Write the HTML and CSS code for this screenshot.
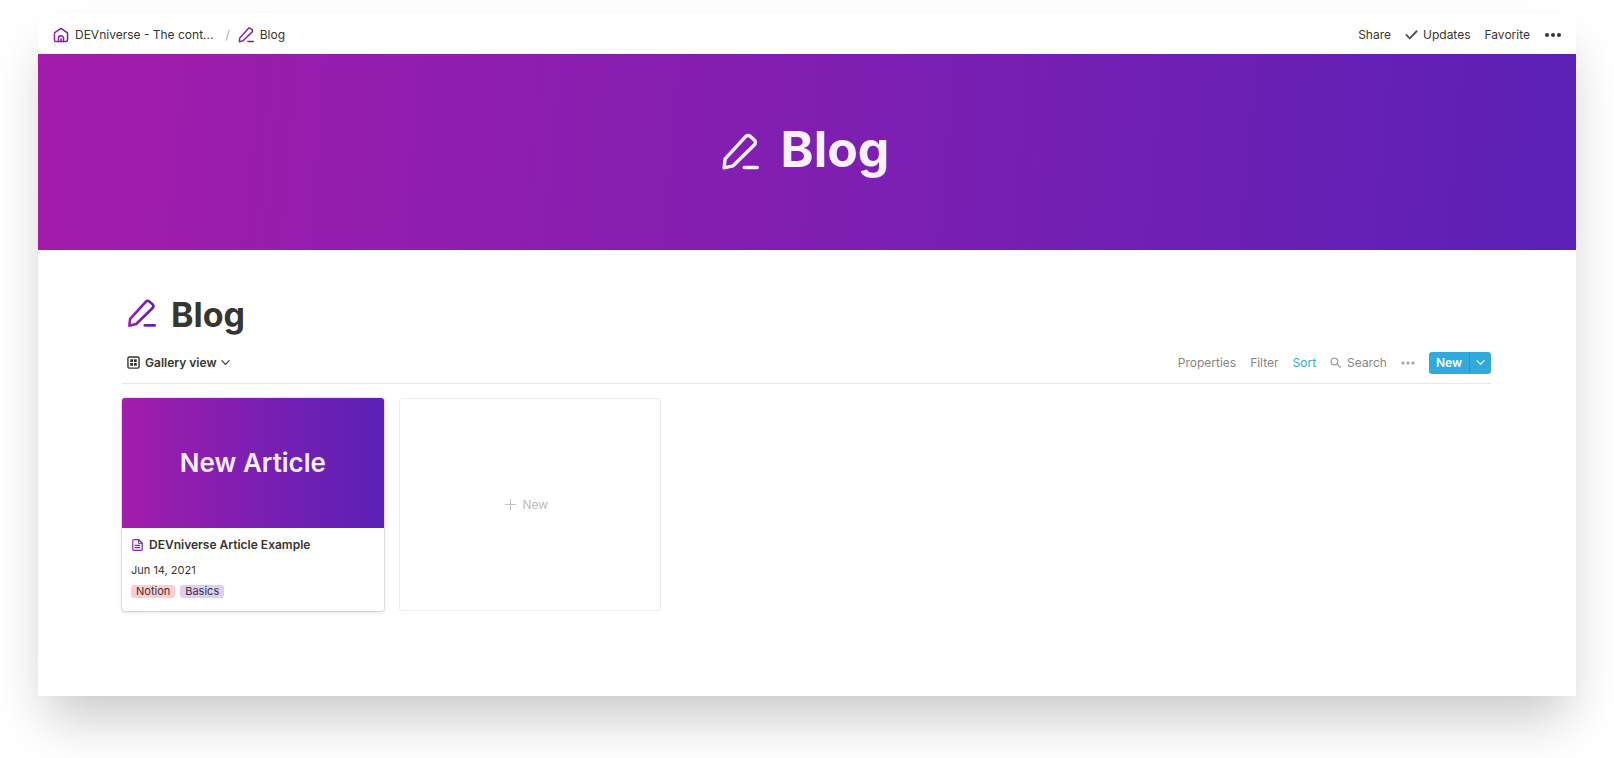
FILE: index.html
```html
<!DOCTYPE html>
<html lang="en">
<head>
  <meta charset="utf-8">
  <meta name="viewport" content="width=device-width, initial-scale=1.0">
  <title>Blog</title>
  <link rel="stylesheet" href="styles.css">
</head>
<body>
  <!-- Shared icon shapes -->
  <svg class="defs" width="0" height="0" aria-hidden="true">
    <defs>
      <linearGradient id="purple" gradientUnits="userSpaceOnUse" x1="0" y1="0" x2="22" y2="0">
        <stop offset="0" stop-color="#a31cab"/>
        <stop offset="1" stop-color="#5b20b5"/>
      </linearGradient>
      <symbol id="pencil" viewBox="0 0 22 22">
        <path d="M1.8 20.2l.6-5.2L14.2 2.1a2 2 0 0 1 2.9-.1l2.2 2a2 2 0 0 1 .1 2.8L7 19z"/>
        <path d="M13.5 20H21"/>
      </symbol>
    </defs>
  </svg>

  <div class="window">
    <header class="topbar">
      <nav class="breadcrumb">
        <a href="#">
          <svg class="icon line" viewBox="0 0 22 22">
            <path d="M2 8.2L11 2l9 6.2V18a2 2 0 0 1-2 2H4a2 2 0 0 1-2-2z"/>
            <path d="M7.5 20v-4.5a3.5 3.5 0 0 1 7 0V20M11 20v-4"/>
          </svg>
          DEVniverse - The cont...
        </a>
        <span class="slash">/</span>
        <a href="#"><svg class="icon line"><use href="#pencil"/></svg>Blog</a>
      </nav>
      <div class="actions">
        <button>Share</button>
        <button>
          <svg class="check" viewBox="0 0 14 14"><path d="M1.5 7.5l3.7 3.7L12.5 3.5"/></svg>
          Updates
        </button>
        <button>Favorite</button>
        <button aria-label="More">
          <svg class="dots" viewBox="0 0 18 6"><circle cx="3" cy="3" r="2"/><circle cx="9" cy="3" r="2"/><circle cx="15" cy="3" r="2"/></svg>
        </button>
      </div>
    </header>

    <div class="banner">
      <svg class="banner-icon"><use href="#pencil"/></svg>
      <span>Blog</span>
    </div>

    <main class="page">
      <h1><svg class="title-icon line"><use href="#pencil"/></svg>Blog</h1>

      <div class="toolbar">
        <button class="view">
          <svg class="grid-icon" viewBox="0 0 14 14">
            <rect class="frame" x="1" y="1" width="12" height="12" rx="1.5"/>
            <path d="M3.5 3.5h3v3h-3zM7.5 3.5h3v3h-3zM3.5 7.5h3v3h-3zM7.5 7.5h3v3h-3z"/>
          </svg>
          Gallery view
          <svg class="chevron" viewBox="0 0 10 10"><path d="M1 3l4 4 4-4"/></svg>
        </button>
        <div class="tools">
          <button>Properties</button>
          <button>Filter</button>
          <button class="active">Sort</button>
          <button>
            <svg class="search-icon" viewBox="0 0 12 12"><circle cx="4.8" cy="4.8" r="3.6"/><path d="M7.5 7.5l3.7 3.7"/></svg>
            Search
          </button>
          <button aria-label="View options">
            <svg class="dots small" viewBox="0 0 14 4"><circle cx="2" cy="2" r="1.6"/><circle cx="7" cy="2" r="1.6"/><circle cx="12" cy="2" r="1.6"/></svg>
          </button>
          <div class="new-group">
            <button>New</button>
            <button class="drop" aria-label="Templates">
              <svg class="chevron" viewBox="0 0 10 10"><path d="M1 3l4 4 4-4"/></svg>
            </button>
          </div>
        </div>
      </div>

      <!-- Gallery -->
      <div class="gallery">
        <a class="card" href="#">
          <div class="cover">New Article</div>
          <div class="card-body">
            <h2>
              <svg class="doc line" viewBox="0 0 22 22">
                <path d="M13 2H5a2 2 0 0 0-2 2v14a2 2 0 0 0 2 2h12a2 2 0 0 0 2-2V8z"/>
                <path d="M13 2v6h6M7 11.5h8M7 15.5h8"/>
              </svg>
              DEVniverse Article Example
            </h2>
            <div class="date">Jun 14, 2021</div>
            <div class="tags">
              <span class="tag red">Notion</span>
              <span class="tag purple">Basics</span>
            </div>
          </div>
        </a>
        <button class="new-card">
          <svg class="plus" viewBox="0 0 12 12"><path d="M6 0v12M0 6h12"/></svg>
          New
        </button>
      </div>
    </main>
  </div>
</body>
</html>
```
FILE: styles.css
```css
* {
  box-sizing: border-box;
}

body {
  margin: 0;
  padding: 14px 38px 62px;
  background: #fff;
  color: #37352f;
  font-family: Inter, "Liberation Sans", sans-serif;
  font-size: 12px;
  line-height: 20px;
}

a {
  color: inherit;
  text-decoration: none;
}

button {
  display: flex;
  align-items: center;
  padding: 0;
  border: 0;
  background: none;
  color: inherit;
  font: inherit;
  cursor: pointer;
}

svg {
  flex: none;
  fill: none;
  stroke-linecap: round;
  stroke-linejoin: round;
}

.defs {
  position: absolute;
}

.line {
  stroke: url(#purple);
  stroke-width: 2;
}

.window {
  background: #fff;
  box-shadow: 0 30px 50px -9px rgba(0, 0, 0, 0.22);
}

/* Top bar */
.topbar {
  display: flex;
  align-items: center;
  justify-content: space-between;
  height: 40px;
  padding: 1px 14px 0 15px;
}

.breadcrumb,
.breadcrumb a,
.actions {
  display: flex;
  align-items: center;
}

.breadcrumb a {
  gap: 6px;
}

.icon {
  width: 16px;
  height: 16px;
}

.slash {
  margin: 0 8px 0 12px;
  color: #aaa;
}

.actions {
  gap: 14px;
}

.actions button {
  gap: 5px;
}

.check {
  width: 13px;
  height: 13px;
  stroke: #55534e;
  stroke-width: 2;
}

.dots {
  width: 18px;
  height: 6px;
  fill: #37352f;
}

/* Cover banner */
.banner {
  display: flex;
  align-items: center;
  justify-content: center;
  gap: 22px;
  height: 196px;
  padding-right: 4px;
  background: linear-gradient(95deg, #a31cab, #7c1fb2 55%, #5b20b5);
  color: #f7f0ff;
  font-size: 50px;
  font-weight: 700;
  line-height: 60px;
}

.banner span {
  padding-bottom: 6px;
}

.banner-icon {
  width: 38px;
  height: 38px;
  stroke: #f7f0ff;
  stroke-width: 2;
}

/* Page content */
.page {
  padding: 41px 85px 85px 84px;
}

h1 {
  display: flex;
  align-items: center;
  gap: 15px;
  margin: 0;
  padding-left: 5px;
  font-size: 34px;
  font-weight: 700;
  line-height: 48px;
}

.title-icon {
  width: 29px;
  height: 29px;
  margin-bottom: 4px;
}

.toolbar {
  display: flex;
  align-items: center;
  justify-content: space-between;
  height: 45px;
  padding: 3px 0 0 5px;
  border-bottom: 1px solid #e6e6e5;
}

.view {
  gap: 5px;
  font-weight: 600;
}

.grid-icon {
  width: 13px;
  height: 13px;
  fill: #37352f;
}

.grid-icon .frame {
  fill: none;
  stroke: #37352f;
  stroke-width: 1.5;
}

.chevron {
  width: 9px;
  height: 9px;
  stroke: currentColor;
  stroke-width: 1.3;
}

.tools {
  display: flex;
  align-items: center;
  gap: 14px;
  color: #878682;
}

.tools button {
  gap: 6px;
}

.tools .active {
  color: #2eaadc;
}

.search-icon {
  width: 11px;
  height: 11px;
  stroke: #a5a4a1;
  stroke-width: 1.5;
}

.dots.small {
  width: 14px;
  height: 4px;
  fill: #a5a4a1;
}

.new-group {
  display: flex;
  overflow: hidden;
  border-radius: 3px;
  background: #2eaadc;
  color: #fff;
  font-weight: 600;
}

.new-group button {
  height: 22px;
  padding: 0 7px;
}

.new-group .drop {
  padding: 0 6px;
  border-left: 1px solid #2897c4;
}

/* Gallery */
.gallery {
  display: grid;
  grid-template-columns: repeat(auto-fill, minmax(260px, 1fr));
  gap: 15px;
  padding-top: 14px;
}

.card {
  overflow: hidden;
  border-radius: 3px;
  background: #fff;
  box-shadow: 0 0 0 1px rgba(15, 15, 15, 0.1), 0 2px 4px rgba(15, 15, 15, 0.1);
}

.cover {
  display: flex;
  align-items: center;
  justify-content: center;
  height: 130px;
  background: linear-gradient(90deg, #a31cab, #7c1fb2 50%, #5b20b5);
  color: #f7f0ff;
  font-size: 26px;
  font-weight: 600;
}

.card-body {
  padding: 7px 9px 13px;
}

h2 {
  display: flex;
  align-items: center;
  gap: 5px;
  margin: 0;
  font-size: 12px;
  font-weight: 600;
  line-height: 20px;
}

.doc {
  width: 13px;
  height: 14px;
}

.date {
  padding: 5px 0;
  font-size: 11px;
  line-height: 20px;
}

.tags {
  display: flex;
  gap: 5px;
}

.tag {
  padding: 0 5px;
  border-radius: 3px;
  font-size: 11px;
  line-height: 13px;
}

.red {
  background: #ffccd1;
}

.purple {
  background: #decdf5;
}

.new-card {
  justify-content: center;
  gap: 6px;
  padding-right: 6px;
  border: 1px solid #ececeb;
  border-radius: 3px;
  color: #bdbcba;
}

.plus {
  width: 11px;
  height: 11px;
  stroke: #bdbcba;
}
```
